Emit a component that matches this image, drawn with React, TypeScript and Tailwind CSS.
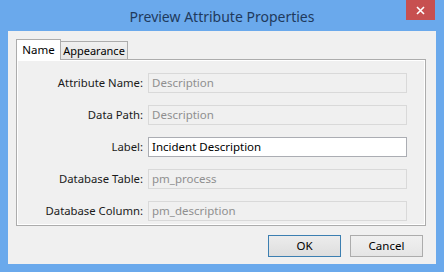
const font = { fontFamily: '"Noto Sans", "Open Sans", sans-serif' }

type Field = {
    label: string
    value: string
    enabled?: boolean
}

const fields: Field[] = [
    { label: "Attribute Name:", value: "Description" },
    { label: "Data Path:", value: "Description" },
    { label: "Label:", value: "Incident Description", enabled: true },
    { label: "Database Table:", value: "pm_process" },
    { label: "Database Column:", value: "pm_description" },
]

function FieldRow({ label, value, enabled }: Field) {
    return (
        <div className="flex items-center h-[20px]">
            <div className="w-[130px] text-right text-[11.3px] text-[#1a1a1a] pr-[5px] leading-none">
                {label}
            </div>
            <div
                className={`w-[259px] h-[20px] flex items-center px-[3px] text-[11.5px] leading-none border ${
                    enabled
                        ? "bg-white border-[#abadb3] text-black"
                        : "bg-[#f0f0f0] border-[#d9d9d9] text-[#8f8f8f]"
                }`}
            >
                {value}
            </div>
        </div>
    )
}

export default function App() {
    return (
        <div
            className="w-[444px] h-[272px] bg-[#6aa9ec] flex flex-col overflow-hidden"
            style={font}
        >
            {/* title bar */}
            <div className="relative h-[31px] flex items-center justify-center">
                <span className="text-[14px] text-[#1f3a5c] pt-[1px]">
                    Preview Attribute Properties
                </span>
                <div className="absolute right-[9px] top-0 w-[29px] h-[20px] bg-[#c75050] flex items-center justify-center">
                    <svg width="9" height="9" viewBox="0 0 9 9">
                        <path d="M1 1 L8 8 M8 1 L1 8" stroke="white" strokeWidth="1.6" />
                    </svg>
                </div>
            </div>

            {/* client area */}
            <div className="flex-1 mx-[8px] mb-[8px] bg-[#f0f0f0] flex flex-col pt-[8px] pl-[8px] pr-[10px]">
                <div className="flex items-end h-[20px]">
                    <div className="h-[21px] w-[45px] bg-white border border-b-0 border-[#acacac] flex items-center justify-center text-[11.5px] text-black relative z-10 -mb-[1px]">
                        Name
                    </div>
                    <div className="h-[18px] w-[67px] bg-gradient-to-b from-[#f0f0f0] to-[#e5e5e5] border border-l-0 border-b-0 border-[#acacac] flex items-center justify-center text-[11px] text-black pt-[1px]">
                        Appearance
                    </div>
                </div>
                <div className="h-[167px] border border-[#acacac] bg-white p-[1px]">
                    <div className="h-full bg-[#f0f0f0] flex flex-col gap-[12px] pt-[12px]">
                        {fields.map((f) => (
                            <FieldRow key={f.label} {...f} />
                        ))}
                    </div>
                </div>
                <div className="flex justify-end gap-[9px] mt-[9px] pr-[3px]">
                    <button className="w-[73px] h-[22px] border border-[#3c7fb1] bg-gradient-to-b from-[#ececec] to-[#dedede] text-[11.5px] text-black">
                        OK
                    </button>
                    <button className="w-[73px] h-[22px] border border-[#acacac] bg-gradient-to-b from-[#f0f0f0] to-[#e5e5e5] text-[11.5px] text-black">
                        Cancel
                    </button>
                </div>
            </div>
        </div>
    )
}
